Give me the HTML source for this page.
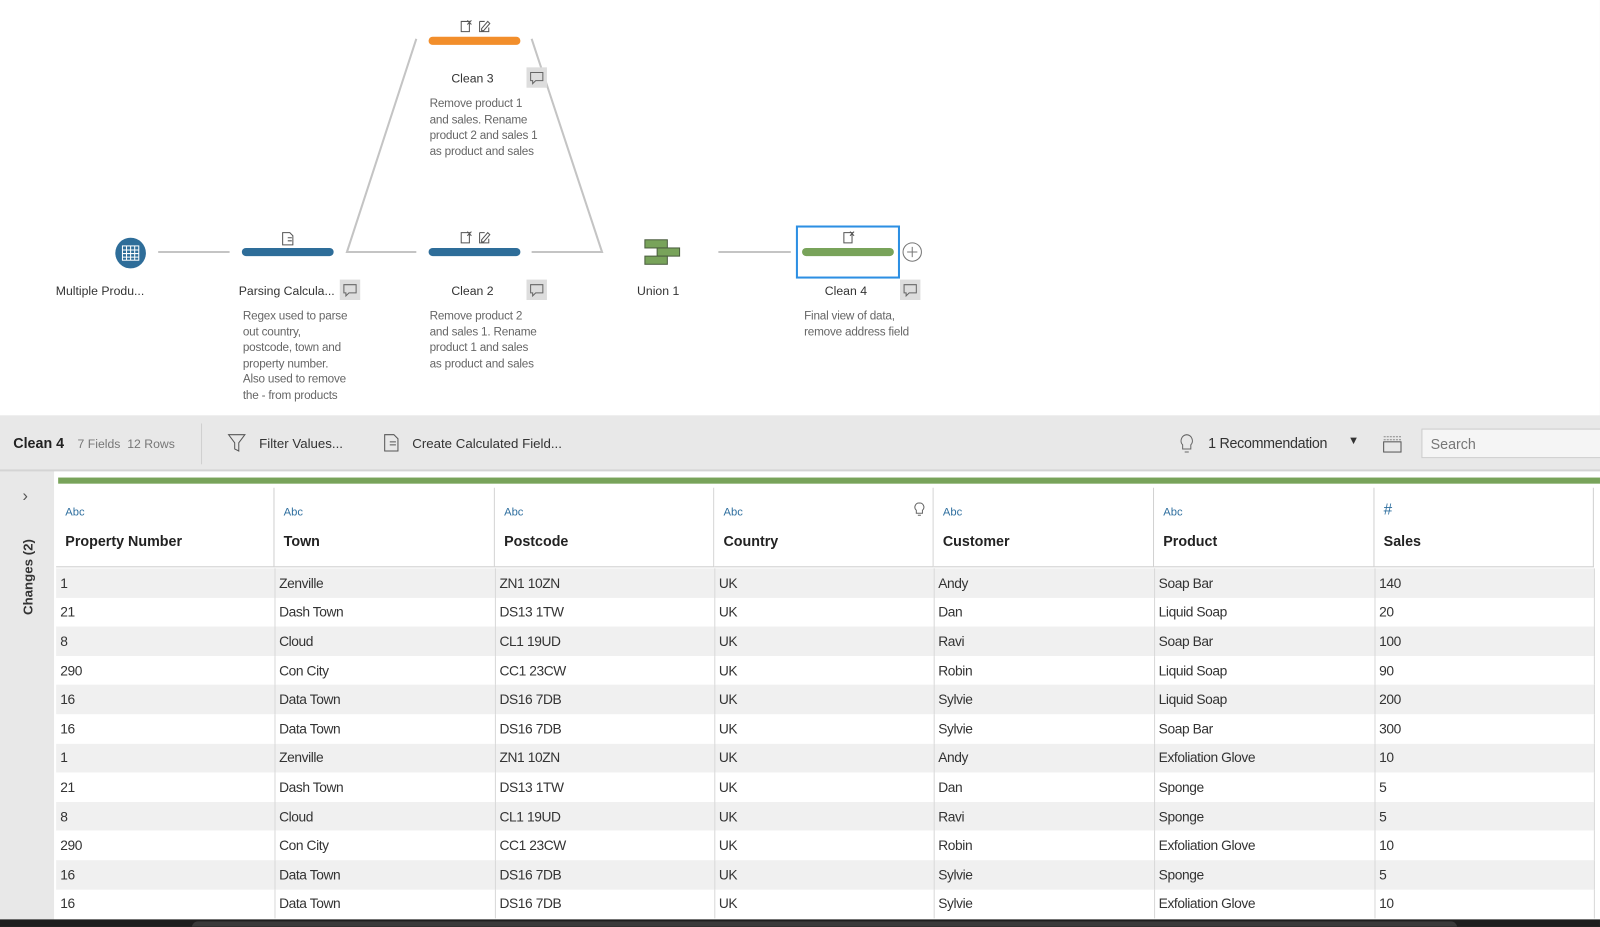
<!DOCTYPE html>
<html><head><meta charset="utf-8"><style>
*{margin:0;padding:0;box-sizing:border-box}
body{width:1600px;height:926px;overflow:hidden;background:#1e1e1e;font-family:"Liberation Sans",sans-serif;position:relative;color:#333}
#w{position:absolute;left:0;top:0;width:1568px;height:908px;transform:scale(1.0204);transform-origin:0 0;background:#fff;overflow:hidden}
.a{position:absolute}
.lbl{font-size:12px;color:#333;text-align:center;white-space:nowrap}
.desc{font-size:11.5px;color:#666;line-height:15.5px;letter-spacing:-0.2px}
.tb{font-size:13px}
table{border-collapse:collapse;table-layout:fixed}
td{font-size:13.5px;letter-spacing:-0.4px;height:28.6px;padding-left:4px;border-right:1px solid #d8d8d8;color:#333;white-space:nowrap}
tr:nth-child(odd) td{background:#f0f0f0}
tr:nth-child(even) td{background:#fff}
.hd{position:absolute;top:478px;height:78px;background:#fff;border-right:1px solid #d0d0d0;border-bottom:1px solid #ccc}
.hd .t{position:absolute;left:9px;top:18px;font-size:11px;color:#2f6f9f}
.hd .n{position:absolute;left:9px;top:44px;font-size:14px;font-weight:bold;color:#222}
</style></head><body><div id="w">
<svg class="a" style="left:0;top:0" width="1568" height="407">
<g stroke="#c4c4c4" stroke-width="2" fill="none">
<line x1="155" y1="247" x2="225" y2="247"/>
<polyline points="408,38 340,247 408,247"/>
<polyline points="521,38 590,247 521,247"/>
<line x1="704" y1="247" x2="775" y2="247"/>
</g>
<circle cx="128" cy="248" r="15" fill="#2e6d99"/>
<g stroke="#fff" stroke-width="1" fill="none"><rect x="120" y="241" width="16" height="14"/><line x1="120" y1="245" x2="136" y2="245"/><line x1="120" y1="248.5" x2="136" y2="248.5"/><line x1="120" y1="252" x2="136" y2="252"/><line x1="124" y1="241" x2="124" y2="255"/><line x1="128" y1="241" x2="128" y2="255"/><line x1="132" y1="241" x2="132" y2="255"/></g>
<rect x="237" y="243" width="90" height="8" rx="4" fill="#2e6d99"/>
<rect x="420" y="243" width="90" height="8" rx="4" fill="#2e6d99"/>
<rect x="420" y="36" width="90" height="8" rx="4" fill="#f28e2b"/>
<rect x="781" y="222" width="100" height="50" fill="#fff" stroke="#2d8fe3" stroke-width="2"/>
<rect x="786" y="243" width="90" height="8" rx="4" fill="#78a35a"/>
<circle cx="894" cy="247" r="9" fill="#fff" stroke="#777"/><path d="M889 247h10M894 242v10" stroke="#777"/>
<g fill="#78a35a" stroke="#4a5d3e"><rect x="632" y="235" width="22" height="8"/><rect x="644" y="243" width="22" height="8"/><rect x="632" y="251" width="22" height="8"/></g>
<g stroke="#555" fill="none" stroke-width="1">
<path d="M277 228h7l3 3v9h-10z M282 233h4M282 236h4"/>
<path d="M452 228h8v10h-8z M458 227l4 4M462 227l-4 4"/><path d="M470 228h5M470 228v10h9v-4M472 235l6-7 2 2-6 7h-2z"/>
<path d="M452 21h8v10h-8z M458 20l4 4M462 20l-4 4"/><path d="M470 21h5M470 21v10h9v-4M472 28l6-7 2 2-6 7h-2z"/>
<path d="M827 228h8v10h-8z M833 227l4 4M837 227l-4 4"/>
</g>
<g><rect x="516" y="66" width="20" height="20" fill="#ddd"/><rect x="333" y="274" width="20" height="20" fill="#ddd"/><rect x="516" y="274" width="20" height="20" fill="#ddd"/><rect x="882" y="274" width="20" height="20" fill="#ddd"/></g>
<g stroke="#666" fill="none"><path d="M520 71h12v8h-7l-3 3v-3h-2z"/><path d="M337 279h12v8h-7l-3 3v-3h-2z"/><path d="M520 279h12v8h-7l-3 3v-3h-2z"/><path d="M886 279h12v8h-7l-3 3v-3h-2z"/></g>
</svg>
<div class="a lbl" style="left:40px;top:278px;width:116px">Multiple Produ...</div>
<div class="a lbl" style="left:228px;top:278px;width:106px">Parsing Calcula...</div>
<div class="a lbl" style="left:430px;top:70px;width:66px">Clean 3</div>
<div class="a lbl" style="left:430px;top:278px;width:66px">Clean 2</div>
<div class="a lbl" style="left:612px;top:278px;width:66px">Union 1</div>
<div class="a lbl" style="left:796px;top:278px;width:66px">Clean 4</div>
<div class="a desc" style="left:238px;top:303px">Regex used to parse<br>out country,<br>postcode, town and<br>property number.<br>Also used to remove<br>the - from products</div>
<div class="a desc" style="left:421px;top:303px">Remove product 2<br>and sales 1. Rename<br>product 1 and sales<br>as product and sales</div>
<div class="a desc" style="left:421px;top:95px">Remove product 1<br>and sales. Rename<br>product 2 and sales 1<br>as product and sales</div>
<div class="a desc" style="left:788px;top:303px">Final view of data,<br>remove address field</div>

<div class="a" style="left:0;top:407px;width:1568px;height:494px;background:#e8e8e8"></div>
<div class="a" style="left:0;top:460px;width:1568px;height:2px;background:#d4d4d4"></div>
<div class="a" style="left:13px;top:426px;font-size:14px;font-weight:bold;color:#222">Clean 4</div>
<div class="a" style="left:76px;top:428px;font-size:12px;color:#777">7 Fields&nbsp;&nbsp;12 Rows</div>
<div class="a" style="left:197px;top:415px;width:1px;height:40px;background:#d0d0d0"></div>
<svg class="a" style="left:222px;top:424px" width="20" height="20"><path d="M2 2h16l-6 8v8l-4-2v-6z" fill="none" stroke="#555"/></svg>
<div class="a tb" style="left:254px;top:427px">Filter Values...</div>
<svg class="a" style="left:375px;top:424px" width="18" height="20"><path d="M2 2h9l4 4v12h-13z M7 9h6M7 12h6" fill="none" stroke="#555"/></svg>
<div class="a tb" style="left:404px;top:427px">Create Calculated Field...</div>
<svg class="a" style="left:1153px;top:424px" width="20" height="22"><path d="M10 2a6 6 0 0 0-4 10v4h8v-4a6 6 0 0 0-4-10zM8 19h4" fill="none" stroke="#666"/></svg>
<div class="a" style="left:1184px;top:426px;font-size:14px;letter-spacing:-0.3px">1 Recommendation</div>
<div class="a" style="left:1321px;top:426px;font-size:11px">▼</div>
<svg class="a" style="left:1354px;top:424px" width="22" height="22"><rect x="2" y="9" width="17" height="10" fill="none" stroke="#555"/><path d="M2 4h17M2 7h17" stroke="#888" stroke-dasharray="2 1"/></svg>
<div class="a" style="left:1393px;top:420px;width:207px;height:29px;background:#f5f5f5;border:1px solid #ccc"></div>
<div class="a" style="left:1402px;top:427px;font-size:14px;color:#777">Search</div>

<div class="a" style="left:53px;top:462px;width:1515px;height:440px;background:#fff"></div>
<div class="a" style="left:22px;top:478px;font-size:16px;color:#555">›</div>
<div class="a" style="left:-10px;top:558px;transform:rotate(-90deg);font-size:13px;font-weight:bold;color:#333;white-space:nowrap">Changes (2)</div>
<div class="a" style="left:57px;top:468px;width:1511px;height:6px;background:#78a35a"></div>
<div class="hd" style="left:55px;width:214px"><div class="t">Abc</div><div class="n">Property Number</div></div>
<div class="hd" style="left:269px;width:216px"><div class="t">Abc</div><div class="n">Town</div></div>
<div class="hd" style="left:485px;width:215px"><div class="t">Abc</div><div class="n">Postcode</div></div>
<div class="hd" style="left:700px;width:215px"><div class="t">Abc</div><div class="n">Country</div><svg style="position:absolute;right:7px;top:14px" width="12" height="16"><path d="M6 1a4 4 0 0 0-3 7v3h6v-3a4 4 0 0 0-3-7zM4.5 13h3" fill="none" stroke="#666"/></svg></div>
<div class="hd" style="left:915px;width:216px"><div class="t">Abc</div><div class="n">Customer</div></div>
<div class="hd" style="left:1131px;width:216px"><div class="t">Abc</div><div class="n">Product</div></div>
<div class="hd" style="left:1347px;width:215px"><div class="t" style="font-size:15px;top:13px">#</div><div class="n">Sales</div></div>
<table class="a" style="left:55px;top:557px;width:1507px">
<colgroup><col style="width:214px"><col style="width:216px"><col style="width:215px"><col style="width:215px"><col style="width:216px"><col style="width:216px"><col style="width:215px"></colgroup>
<tr><td>1</td><td>Zenville</td><td>ZN1 10ZN</td><td>UK</td><td>Andy</td><td>Soap Bar</td><td>140</td></tr>
<tr><td>21</td><td>Dash Town</td><td>DS13 1TW</td><td>UK</td><td>Dan</td><td>Liquid Soap</td><td>20</td></tr>
<tr><td>8</td><td>Cloud</td><td>CL1 19UD</td><td>UK</td><td>Ravi</td><td>Soap Bar</td><td>100</td></tr>
<tr><td>290</td><td>Con City</td><td>CC1 23CW</td><td>UK</td><td>Robin</td><td>Liquid Soap</td><td>90</td></tr>
<tr><td>16</td><td>Data Town</td><td>DS16 7DB</td><td>UK</td><td>Sylvie</td><td>Liquid Soap</td><td>200</td></tr>
<tr><td>16</td><td>Data Town</td><td>DS16 7DB</td><td>UK</td><td>Sylvie</td><td>Soap Bar</td><td>300</td></tr>
<tr><td>1</td><td>Zenville</td><td>ZN1 10ZN</td><td>UK</td><td>Andy</td><td>Exfoliation Glove</td><td>10</td></tr>
<tr><td>21</td><td>Dash Town</td><td>DS13 1TW</td><td>UK</td><td>Dan</td><td>Sponge</td><td>5</td></tr>
<tr><td>8</td><td>Cloud</td><td>CL1 19UD</td><td>UK</td><td>Ravi</td><td>Sponge</td><td>5</td></tr>
<tr><td>290</td><td>Con City</td><td>CC1 23CW</td><td>UK</td><td>Robin</td><td>Exfoliation Glove</td><td>10</td></tr>
<tr><td>16</td><td>Data Town</td><td>DS16 7DB</td><td>UK</td><td>Sylvie</td><td>Sponge</td><td>5</td></tr>
<tr><td>16</td><td>Data Town</td><td>DS16 7DB</td><td>UK</td><td>Sylvie</td><td>Exfoliation Glove</td><td>10</td></tr>
</table>
<div class="a" style="left:0;top:901px;width:1568px;height:30px;background:#1e1e1e"></div>
<div class="a" style="left:188px;top:903px;width:1240px;height:30px;background:#3a3a3a;border-radius:6px 6px 0 0"></div>
</div></body></html>
